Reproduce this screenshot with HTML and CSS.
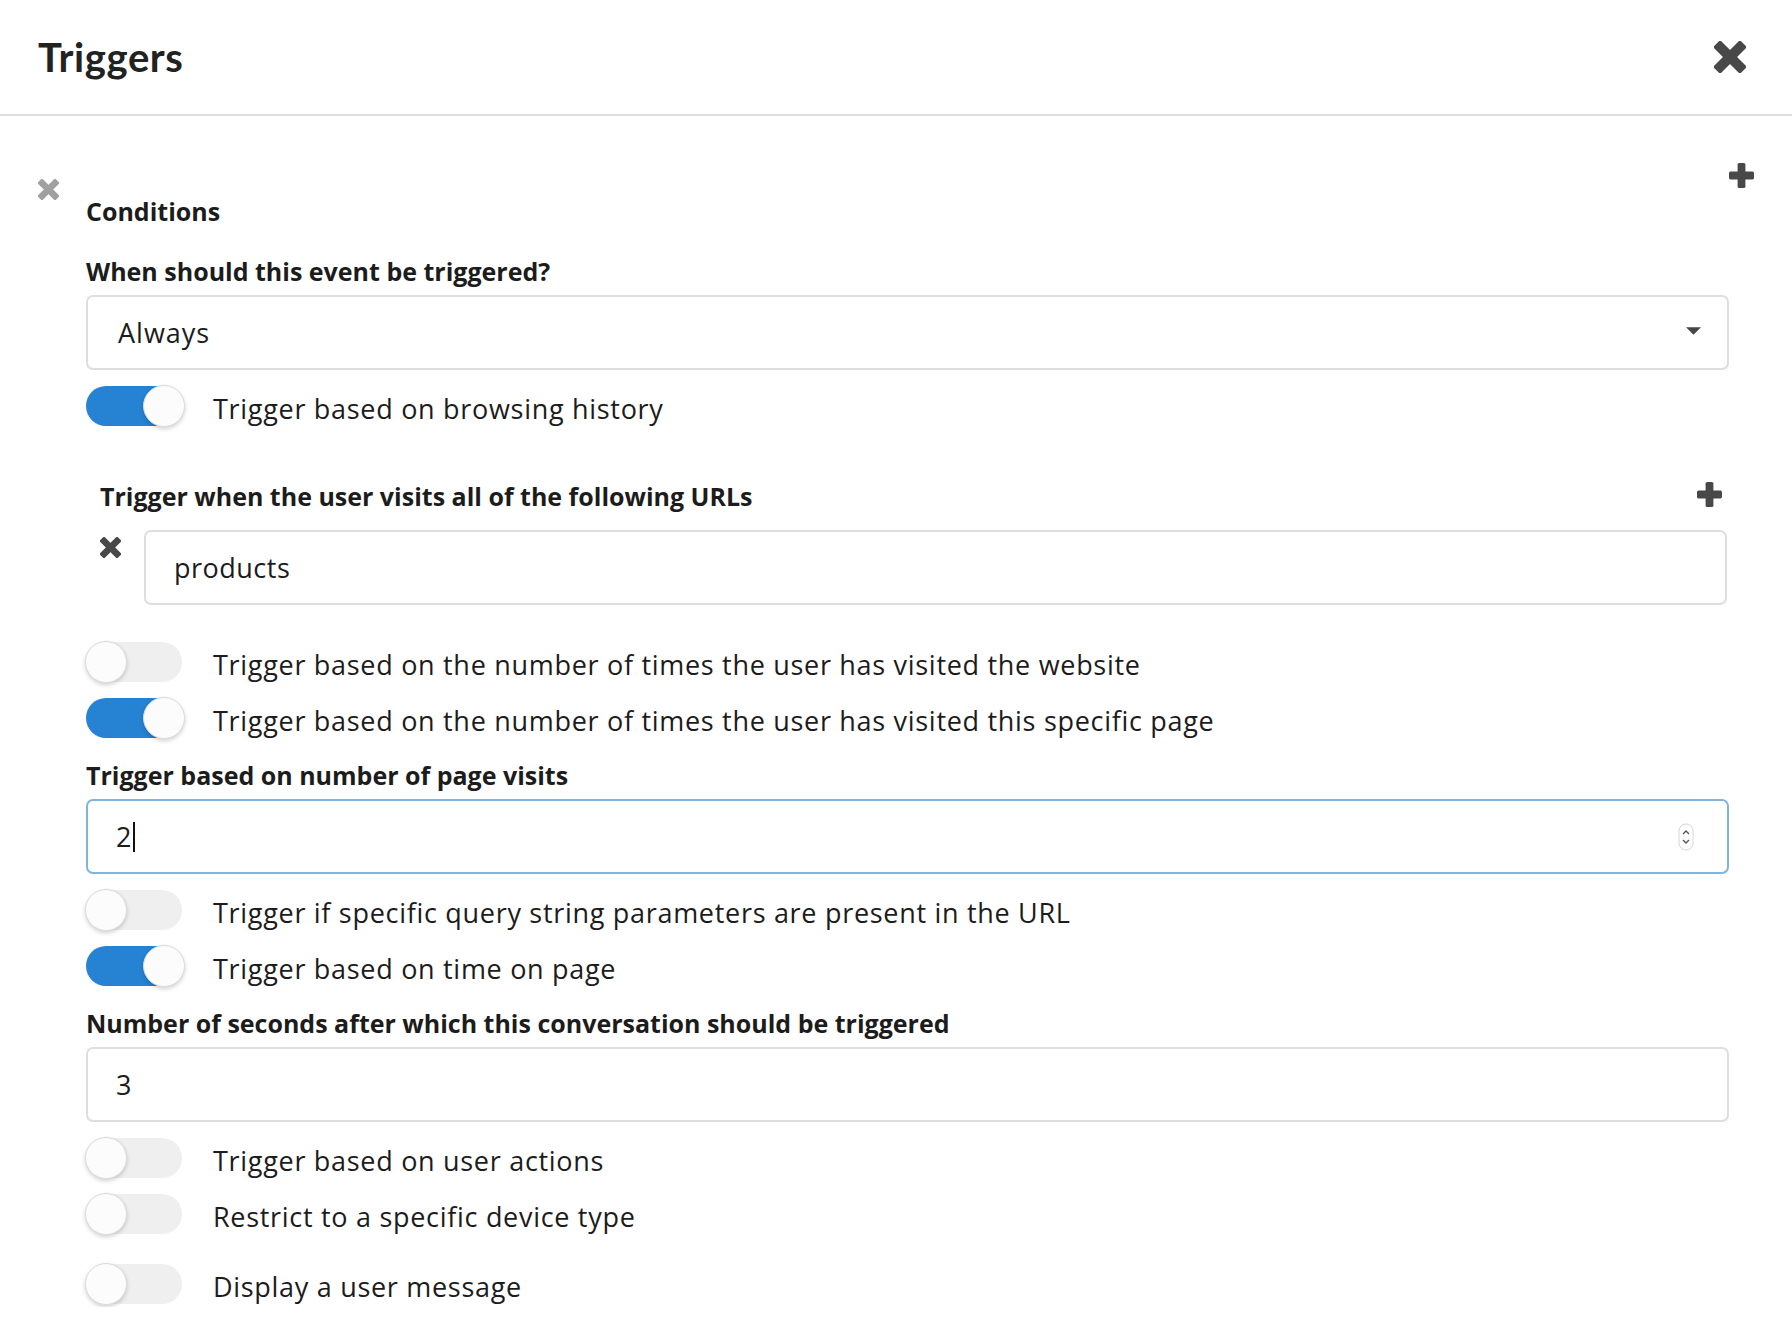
FILE: index.html
```html
<!DOCTYPE html>
<html>
<head>
<meta charset="utf-8">
<link rel="stylesheet" href="styles.css">
</head>
<body>
<div class="header">
  <h1 class="title">Triggers</h1>
  <svg class="close" viewBox="0 0 32 32"><g transform="rotate(45 16 16)"><rect x="11" y="-3" width="10" height="38" rx="2"/><rect x="-3" y="11" width="38" height="10" rx="2"/></g></svg>
</div>
<div class="section">
  <div class="remove-col">
    <svg class="remove" viewBox="0 0 32 32"><g transform="rotate(45 16 16)"><rect x="11" y="-3" width="10" height="38" rx="2"/><rect x="-3" y="11" width="38" height="10" rx="2"/></g></svg>
  </div>
  <div class="content">
    <div class="section-title">Conditions</div>
    <div class="label l-first">When should this event be triggered?</div>
    <div class="field select">
      <span>Always</span>
      <svg class="caret" viewBox="0 0 16 8"><path d="M0 0h16L8 8z"/></svg>
    </div>
    <div class="toggles t-first">
      <div class="toggle-row"><span class="switch on"><span class="knob"></span></span><span class="toggle-text">Trigger based on browsing history</span></div>
    </div>
    <div class="urls">
      <div class="urls-head">
        <span class="label-b">Trigger when the user visits all of the following URLs</span>
        <svg class="plus small" viewBox="0 0 32 32"><rect x="11" y="0" width="10" height="32" rx="2"/><rect x="0" y="11" width="32" height="10" rx="2"/></svg>
      </div>
      <div class="url-row">
        <svg class="remove dark" viewBox="0 0 32 32"><g transform="rotate(45 16 16)"><rect x="11" y="-3" width="10" height="38" rx="2"/><rect x="-3" y="11" width="38" height="10" rx="2"/></g></svg>
        <div class="field url">products</div>
      </div>
    </div>
    <div class="toggles t-urls">
      <div class="toggle-row"><span class="switch"><span class="knob"></span></span><span class="toggle-text">Trigger based on the number of times the user has visited the website</span></div>
      <div class="toggle-row"><span class="switch on"><span class="knob"></span></span><span class="toggle-text">Trigger based on the number of times the user has visited this specific page</span></div>
    </div>
    <div class="label">Trigger based on number of page visits</div>
    <div class="field focused">
      <span class="value">2</span><span class="cursor"></span>
      <svg class="spinner" viewBox="0 0 16 28"><rect x="1" y="1" width="14" height="26" rx="7" fill="#fff" stroke="#d6d6d6"/><path d="M5 11l3-3 3 3M5 17l3 3 3-3" fill="none" stroke="#555" stroke-width="1.4"/></svg>
    </div>
    <div class="toggles">
      <div class="toggle-row"><span class="switch"><span class="knob"></span></span><span class="toggle-text">Trigger if specific query string parameters are present in the URL</span></div>
      <div class="toggle-row"><span class="switch on"><span class="knob"></span></span><span class="toggle-text">Trigger based on time on page</span></div>
    </div>
    <div class="label">Number of seconds after which this conversation should be triggered</div>
    <div class="field"><span class="value">3</span></div>
    <div class="toggles">
      <div class="toggle-row"><span class="switch"><span class="knob"></span></span><span class="toggle-text">Trigger based on user actions</span></div>
      <div class="toggle-row"><span class="switch"><span class="knob"></span></span><span class="toggle-text">Restrict to a specific device type</span></div>
      <div class="toggle-row last"><span class="switch"><span class="knob"></span></span><span class="toggle-text">Display a user message</span></div>
    </div>
  </div>
  <div class="add-col">
    <svg class="plus" viewBox="0 0 32 32"><rect x="11" y="0" width="10" height="32" rx="2"/><rect x="0" y="11" width="32" height="10" rx="2"/></svg>
  </div>
</div>
</body>
</html>
```

FILE: styles.css
```css
html, body {
  margin: 0;
  padding: 0;
  background: #fff;
}
body {
  font-family: "Open Sans", Lato, sans-serif;
  color: #1c1c1c;
  overflow: hidden;
}
.header {
  height: 116px;
  border-bottom: 2px solid #dedede;
  display: flex;
  align-items: center;
  justify-content: space-between;
  padding: 0 46px 0 38px;
  box-sizing: border-box;
}
.title {
  margin: 0;
  font-family: Lato, sans-serif;
  font-size: 40px;
  font-weight: 700;
  color: #222;
  letter-spacing: 0.6px;
}
.close {
  width: 32px;
  height: 32px;
  fill: #484848;
}
.section {
  display: grid;
  grid-template-columns: 48px 1fr 25px;
  padding: 47px 38px 0 38px;
}
.remove-col {
  padding-top: 16px;
}
.remove {
  width: 21px;
  height: 21px;
  fill: #a0a0a0;
  display: block;
}
.remove.dark {
  fill: #484848;
  margin-top: 7px;
}
.plus {
  width: 25px;
  height: 25px;
  fill: #484848;
  display: block;
}
.section-title {
  margin-top: 33px;
  font-size: 25px;
  line-height: 30px;
  font-weight: 700;
  color: #1c1c1c;
}
.label, .label-b {
  font-size: 25px;
  line-height: 30px;
  font-weight: 700;
  color: #1c1c1c;
  letter-spacing: 0;
}
.label {
  margin-top: 19px;
}
.label.l-first {
  margin-top: 30px;
}
.field {
  margin-top: 9px;
  height: 75px;
  box-sizing: border-box;
  border: 2px solid #dedede;
  border-radius: 7px;
  display: flex;
  align-items: center;
  padding: 0 30px 0 28px;
  font-size: 27px;
  color: #1c1c1c;
  letter-spacing: 0.5px;
}
.select {
  padding-left: 30px;
  justify-content: space-between;
  padding-right: 26px;
  letter-spacing: 1px;
}
.caret {
  width: 15px;
  height: 8px;
  fill: #454545;
  margin-top: -4px;
}
.field.focused {
  border-color: #80b4da;
  padding-right: 33px;
}
.cursor {
  display: inline-block;
  width: 2px;
  height: 30px;
  background: #111;
  margin-left: 1px;
}
.spinner {
  width: 16px;
  height: 28px;
  margin-left: auto;
}
.toggles {
  margin-top: 13px;
  display: flex;
  flex-direction: column;
  gap: 10px;
}
.toggles.t-first {
  margin-top: 13px;
}
.toggles.t-urls {
  margin-top: 34px;
}
.toggle-row {
  height: 46px;
  display: flex;
  align-items: center;
}
.toggle-row.last {
  margin-top: 14px;
}
.switch {
  position: relative;
  width: 96px;
  height: 40px;
  border-radius: 20px;
  background: #efefef;
  flex: none;
}
.switch.on {
  background: #2683d3;
}
.knob {
  position: absolute;
  top: -1px;
  left: -1px;
  width: 42px;
  height: 42px;
  border-radius: 50%;
  background: #fcfcfc;
  box-sizing: border-box;
  border: 1px solid #dcdcdc;
  box-shadow: 0 2px 4px rgba(0, 0, 0, 0.18);
}
.switch.on .knob {
  left: 57px;
}
.toggle-text {
  margin-left: 31px;
  font-size: 27px;
  line-height: 34px;
  margin-top: 5px;
  color: #1c1c1c;
  letter-spacing: 0.7px;
}
.urls {
  margin-top: 52px;
  padding-left: 14px;
}
.urls-head {
  display: flex;
  justify-content: space-between;
  align-items: center;
  padding-right: 7px;
}
.urls-head .plus {
  margin-top: -4px;
}
.url-row {
  margin-top: 19px;
  display: grid;
  grid-template-columns: 44px 1fr;
  align-items: start;
}
.field.url {
  margin-top: 0;
  margin-right: 2px;
  padding-left: 28px;
}
```
